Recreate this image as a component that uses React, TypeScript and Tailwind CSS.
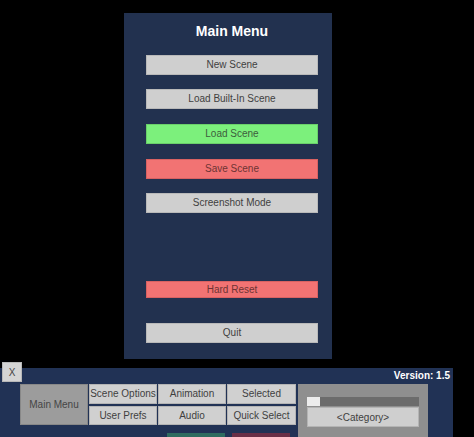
import React from 'react';

const font = { fontFamily: '"Liberation Sans", Arial, sans-serif' };

interface MenuButtonProps {
  label: string;
  tone?: 'grey' | 'green' | 'red';
  className?: string;
}

const toneClasses = {
  grey: 'bg-[#cfcfcf] border-[#b9b9b9] text-[#3f3f3f]',
  green: 'bg-[#7cf07c] border-[#6ad06a] text-[#3c5e3c]',
  red: 'bg-[#f27373] border-[#d86262] text-[#6e3434]',
};

const MenuButton: React.FC<MenuButtonProps> = ({ label, tone = 'grey', className = '' }) => (
  <button
    className={`w-[172px] h-[20px] shrink-0 border flex items-center justify-center text-[10px] leading-none ${toneClasses[tone]} ${className}`}
  >
    {label}
  </button>
);

const Cell: React.FC<{ label: string; className?: string }> = ({ label, className = '' }) => (
  <div
    className={`bg-[#d0d0d0] border border-[#b4b4b4] flex items-center justify-center text-[10px] leading-none text-[#3f3f3f] ${className}`}
  >
    {label}
  </div>
);

export default function App() {
  return (
    <div className="w-[474px] h-[437px] bg-black overflow-hidden flex flex-col" style={font}>
      {/* Main menu panel */}
      <div className="shrink-0 ml-[124px] mt-[13px] w-[208px] h-[346px] bg-[#22314f] flex flex-col pl-[22px]">
        <h1 className="mt-[10px] w-[172px] text-center text-white font-bold text-[14px] leading-[16px]">
          Main Menu
        </h1>
        <MenuButton label="New Scene" className="mt-[16px]" />
        <MenuButton label="Load Built-In Scene" className="mt-[14px]" />
        <MenuButton label="Load Scene" tone="green" className="mt-[15px]" />
        <MenuButton label="Save Scene" tone="red" className="mt-[15px]" />
        <MenuButton label="Screenshot Mode" className="mt-[14px]" />
        <MenuButton label="Hard Reset" tone="red" className="mt-[68px] !h-[17px]" />
        <MenuButton label="Quit" className="mt-[25px]" />
      </div>

      {/* Bottom toolbar */}
      <div className="relative shrink-0 mt-[9px] w-[453px] h-[80px] bg-[#213255] flex flex-col">
        <button className="absolute -top-[6px] left-[2px] w-[20px] h-[20px] bg-[#d4d4d4] border border-[#b8b8b8] flex items-center justify-center text-[10px] text-[#444]">
          X
        </button>

        <div className="h-[16px] shrink-0 flex items-center justify-end pr-[3px] text-white font-bold text-[10px] leading-[16px]">
          Version: 1.5
        </div>

        <div className="flex pl-[20px] gap-[1px]">
          <div className="w-[68px] h-[41px] bg-[#9c9c9c] border border-[#888] flex items-center justify-center text-[10px] text-[#454545]">
            Main Menu
          </div>
          <div className="flex flex-col">
            <div className="grid grid-cols-[68px_68px_69px] grid-rows-[20px_19px] gap-x-[1px] gap-y-[2px]">
              <Cell label="Scene Options" />
              <Cell label="Animation" />
              <Cell label="Selected" />
              <Cell label="User Prefs" />
              <Cell label="Audio" />
              <Cell label="Quick Select" />
            </div>
            <div className="flex mt-[8px] ml-[78px] gap-[7px]">
              <div className="w-[58px] h-[10px] bg-[#2f6c60]" />
              <div className="w-[58px] h-[10px] bg-[#6a2f47]" />
            </div>
          </div>
          <div className="ml-[1px] w-[130px] h-[60px] bg-[#8f8f8f] flex flex-col px-[9px] pt-[13px]">
            <div className="h-[9px] bg-[#6c6c6c] flex">
              <div className="w-[13px] h-full bg-[#ececec]" />
            </div>
            <div className="mt-[1px] h-[20px] bg-[#cfcfcf] border border-[#b4b4b4] flex items-center justify-center text-[10px] text-[#3f3f3f]">
              &lt;Category&gt;
            </div>
          </div>
        </div>
      </div>
    </div>
  );
}
